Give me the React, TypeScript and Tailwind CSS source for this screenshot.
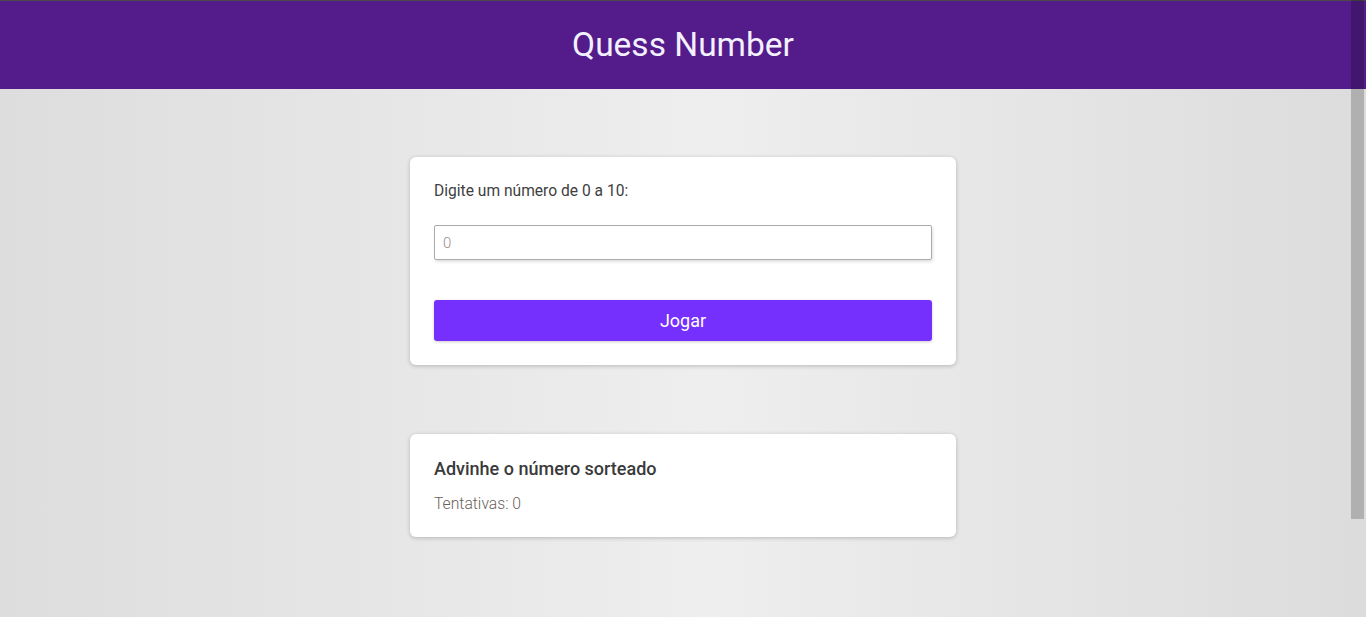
import { useState } from 'react'

const App = () => {
  const [value, setValue] = useState('')
  const [tries, setTries] = useState(0)

  return (
    <div className="relative min-h-[617px] bg-[linear-gradient(to_right,#dddddd_0%,#eeeeee_52%,#dcdcdc_100%)] font-['Roboto',sans-serif]">
      {/* Header */}
      <header className="h-[89px] border-t border-[#4a4a4a] bg-[#531c8a] flex items-center justify-center">
        <h1 className="text-[33.5px] leading-none text-[#f3f0ff] pb-[1px]">Quess Number</h1>
      </header>

      <main className="flex flex-col items-center pt-[68px]">
        <div className="w-[546px] bg-white rounded-md shadow-[0_1px_4px_rgba(0,0,0,0.22)] px-6 pt-[23px] pb-[24px]">
          <label className="block text-[15.6px] leading-[20px] text-[#404040] pt-[1px]">
            Digite um número de 0 a 10:
          </label>
          <input
            type="number"
            value={value}
            onChange={(e) => setValue(e.target.value)}
            placeholder="0"
            className="mt-[24px] block w-full h-[35px] border border-[#ababab] rounded-[2px] px-2 text-[15px] font-light text-[#333] placeholder:text-[#9a8f8a] shadow-[1px_2px_3px_rgba(0,0,0,0.12)] outline-none"
          />
          <button
            onClick={() => setTries(tries + 1)}
            className="mt-[40px] block w-full h-[41px] bg-[#7530fe] text-white text-[18px] rounded-[3px] shadow-[0_1px_3px_rgba(0,0,0,0.2)]"
          >
            Jogar
          </button>
        </div>

        <div className="mt-[69px] w-[546px] bg-white rounded-md shadow-[0_1px_4px_rgba(0,0,0,0.22)] px-6 pt-[24px] pb-[23px]">
          <h2 className="text-[18px] leading-[22px] font-medium text-[#3a3a3a]">Advinhe o número sorteado</h2>
          <p className="mt-[14px] text-[15.7px] leading-[20px] font-light text-[#6b5f5a]">Tentativas: {tries}</p>
        </div>
      </main>

      {/* overlay scrollbar thumb */}
      <div className="absolute top-0 right-[2px] w-[13px] h-[519px] bg-[rgba(0,0,0,0.2)]" />
    </div>
  )
}

export default App
